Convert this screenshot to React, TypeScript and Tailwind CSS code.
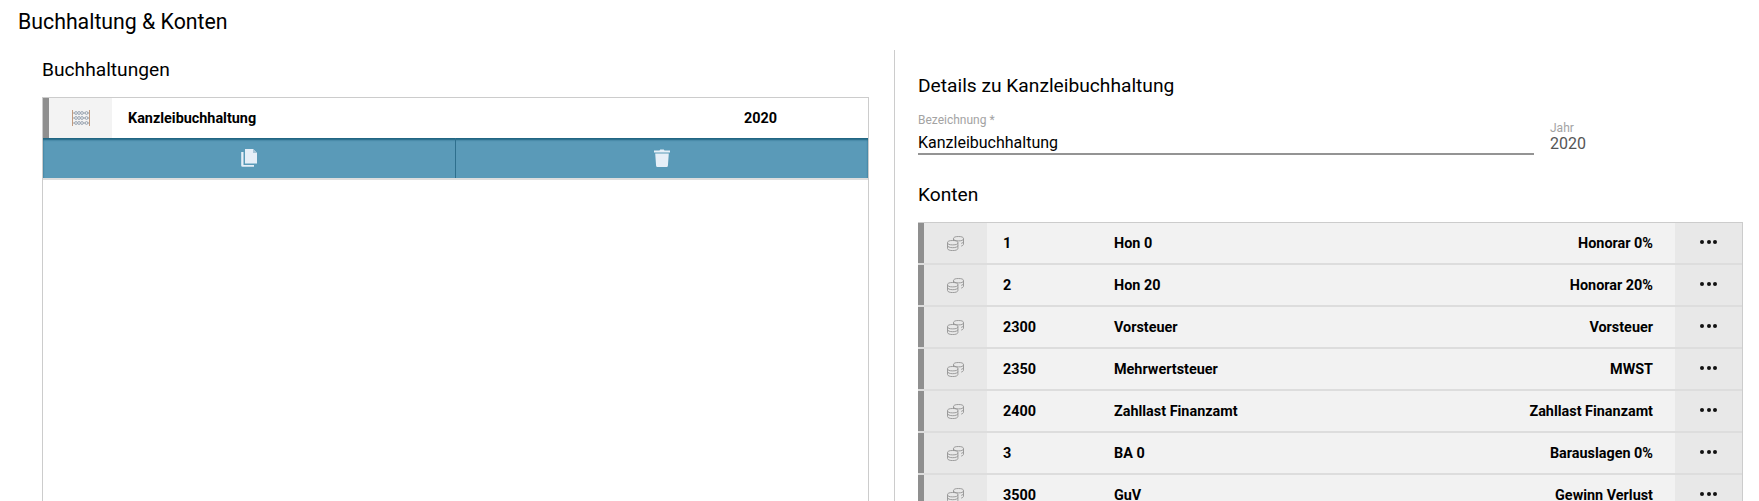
const rows = [
  ["1", "Hon 0", "Honorar 0%"],
  ["2", "Hon 20", "Honorar 20%"],
  ["2300", "Vorsteuer", "Vorsteuer"],
  ["2350", "Mehrwertsteuer", "MWST"],
  ["2400", "Zahllast Finanzamt", "Zahllast Finanzamt"],
  ["3", "BA 0", "Barauslagen 0%"],
  ["3500", "GuV", "Gewinn Verlust"],
];

function Coins() {
  return (
    <svg width="17" height="15" viewBox="0 0 17 15" fill="none" stroke="#949494" strokeWidth="0.9">
      <ellipse cx="11.500" cy="2.700" rx="5" ry="2.200" />
      <path d="M16.500 2.700v5.500c0 .9-1 1.500-2.300 1.900M16.500 5.500c0 .9-1 1.500-2.300 1.900M6.500 2.700v2.100" />
      <ellipse cx="5.700" cy="6.700" rx="5.200" ry="2.200" />
      <path d="M.5 6.700v5.800c0 1.200 2.300 2.100 5.200 2.100s5.200-.9 5.200-2.100V6.700M.5 9.600c0 1.200 2.300 2.100 5.200 2.100s5.200-.9 5.200-2.100" />
    </svg>
  );
}

function Abacus() {
  return (
    <svg width="18" height="16" viewBox="0 0 18 16" fill="none">
      <path d="M.5 0v16M17.500 0v16" stroke="#c09a80" strokeWidth="1" />
      <path d="M1 3h16M1 8h16M1 13h16" stroke="#a0a0a0" strokeWidth="1" />
      {[3, 8, 13].map((y) => (
        <g key={y} stroke="#9aa6b4" strokeWidth="1" fill="#f3f3f3">
          <circle cx="4" cy={y} r="1.400" />
          <circle cx="7" cy={y} r="1.400" />
          <circle cx="10" cy={y} r="1.400" />
          <circle cx="14.500" cy={y} r="1.400" />
        </g>
      ))}
    </svg>
  );
}

function CopyIcon() {
  return (
    <svg width="16" height="18" viewBox="0 0 16 18" fill="#e6eff8">
      <path d="M4 0h8l4 4v10.500H4z" />
      <path d="M12 0v4h4z" fill="#a9c6d8" />
      <path d="M2.500 3v13H13v1.800H1.500a1.300 1.300 0 0 1-1.300-1.300V3z" fill="#e6eff8" />
    </svg>
  );
}

function TrashIcon() {
  return (
    <svg width="16" height="18" viewBox="0 0 16 18" fill="#e6eff8">
      <path d="M0 1.600h5.500L6.200.4h3.600l.7 1.200H16v1.800H0z" />
      <path d="M1.200 4.400h13.600l-.9 12.300a1.300 1.300 0 0 1-1.300 1.200H3.400a1.300 1.300 0 0 1-1.300-1.200z" />
    </svg>
  );
}

export default function App() {
  return (
    <div className="h-[501px] overflow-hidden bg-white font-['Roboto',sans-serif] text-black">
      <h1 className="pl-[18px] pt-[10px] text-[21.300px] leading-[24px] font-normal">Buchhaltung &amp; Konten</h1>
      <div className="mt-[16px] flex">
        <section className="ml-[42px] mr-[1px] w-[827px] shrink-0 pt-[9px]">
          <h2 className="text-[19.200px] leading-[22px] font-normal">Buchhaltungen</h2>
          <div className="mt-[16px] h-[420px] border-x border-t border-[#cccccc]">
            <div className="flex h-[40px]">
              <div className="w-[6px] bg-[#8f8f8f]" />
              <div className="flex w-[63px] items-center justify-center bg-[#f3f3f3]"><Abacus /></div>
              <div className="flex flex-1 items-center pt-[1px] text-[14.400px] font-bold">
                <span className="ml-[16px] w-[616px]">Kanzleibuchhaltung</span>
                <span>2020</span>
              </div>
            </div>
            <div className="flex h-[42px] border-b-2 border-[#dddddd] bg-[#5a9ab8] [box-shadow:inset_0_2px_2px_#1f6480]">
              <div className="flex w-[413px] items-center justify-center border-r border-[#2e6f8d]"><CopyIcon /></div>
              <div className="flex flex-1 items-center justify-center"><TrashIcon /></div>
            </div>
          </div>
        </section>
        <div className="ml-[24px] h-[460px] w-[1px] shrink-0 bg-[#cccccc]" />
        <section className="ml-[23px] w-[825px] shrink-0 pt-[24px]">
          <h2 className="text-[19.200px] leading-[24px] font-normal">Details zu Kanzleibuchhaltung</h2>
          <div className="mt-[14px] flex">
            <div className="w-[616px] border-b-2 border-[#949494]">
              <div className="pt-[1px] text-[12px] leading-[14px] text-[#a3a3a3]">Bezeichnung *</div>
              <div className="mt-[6px] text-[16px] leading-[20px]">Kanzleibuchhaltung</div>
            </div>
            <div className="ml-[16px] pt-[9px]">
              <div className="text-[12px] leading-[14px] text-[#a3a3a3]">Jahr</div>
              <div className="-mt-[1px] text-[16px] leading-[20px] text-[#555555]">2020</div>
            </div>
          </div>
          <h2 className="mt-[28px] text-[19.200px] leading-[24px] font-normal">Konten</h2>
          <div className="mt-[15px] border-r border-t border-[#cccccc]">
            {rows.map(([num, name, desc]) => (
              <div key={num} className="flex h-[42px] border-b-2 border-[#dddddd] bg-[#f2f2f2]">
                <div className="w-[6px] bg-[#8f8f8f]" />
                <div className="flex w-[63px] items-center justify-center bg-[#e8e8e8]"><Coins /></div>
                <div className="flex flex-1 items-center pt-[1px] text-[14.400px] font-bold">
                  <span className="ml-[16px] w-[111px]">{num}</span>
                  <span className="flex-1">{name}</span>
                  <span className="mr-[22px]">{desc}</span>
                </div>
                <div className="flex w-[67px] items-center justify-center gap-[2.500px] bg-[#e8e8e8] pb-[3px]">
                  <span className="h-[4px] w-[4px] rounded-full bg-[#111]" />
                  <span className="h-[4px] w-[4px] rounded-full bg-[#111]" />
                  <span className="h-[4px] w-[4px] rounded-full bg-[#111]" />
                </div>
              </div>
            ))}
          </div>
        </section>
      </div>
    </div>
  );
}
